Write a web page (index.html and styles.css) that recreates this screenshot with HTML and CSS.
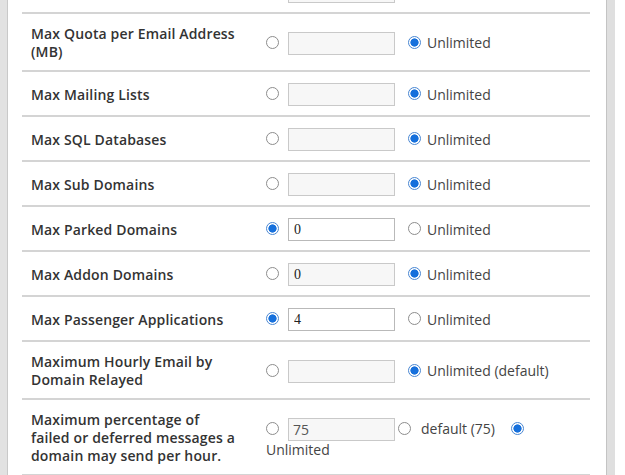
FILE: index.html
```html
<!DOCTYPE html>
<html>
<head>
<meta charset="utf-8">
<link rel="stylesheet" href="styles.css">
</head>
<body>
<div class="frame">
  <div class="left-bar"></div>
  <div class="main">
    <div class="table">
      <div class="row row-cut">
        <div class="label"></div>
        <div class="ctrl"><input type="radio" class="radio"><input type="text" class="field" disabled></div>
      </div>
      <div class="row">
        <div class="label">Max Quota per Email Address (MB)</div>
        <div class="ctrl"><input type="radio" class="radio"><input type="text" class="field" disabled><input type="radio" class="radio gap" checked><span class="opt">Unlimited</span></div>
      </div>
      <div class="row">
        <div class="label">Max Mailing Lists</div>
        <div class="ctrl"><input type="radio" class="radio"><input type="text" class="field" disabled><input type="radio" class="radio gap" checked><span class="opt">Unlimited</span></div>
      </div>
      <div class="row">
        <div class="label">Max SQL Databases</div>
        <div class="ctrl"><input type="radio" class="radio"><input type="text" class="field" disabled><input type="radio" class="radio gap" checked><span class="opt">Unlimited</span></div>
      </div>
      <div class="row">
        <div class="label">Max Sub Domains</div>
        <div class="ctrl"><input type="radio" class="radio"><input type="text" class="field" disabled><input type="radio" class="radio gap" checked><span class="opt">Unlimited</span></div>
      </div>
      <div class="row">
        <div class="label">Max Parked Domains</div>
        <div class="ctrl"><input type="radio" class="radio" checked><input type="text" class="field serif" value="0"><input type="radio" class="radio gap"><span class="opt">Unlimited</span></div>
      </div>
      <div class="row">
        <div class="label">Max Addon Domains</div>
        <div class="ctrl"><input type="radio" class="radio"><input type="text" class="field serif" value="0" disabled><input type="radio" class="radio gap" checked><span class="opt">Unlimited</span></div>
      </div>
      <div class="row">
        <div class="label">Max Passenger Applications</div>
        <div class="ctrl"><input type="radio" class="radio" checked><input type="text" class="field serif" value="4"><input type="radio" class="radio gap"><span class="opt">Unlimited</span></div>
      </div>
      <div class="row">
        <div class="label">Maximum Hourly Email by Domain Relayed</div>
        <div class="ctrl"><input type="radio" class="radio"><input type="text" class="field" disabled><input type="radio" class="radio gap" checked><span class="opt">Unlimited (default)</span></div>
      </div>
      <div class="row">
        <div class="label">Maximum percentage of<br>failed or deferred messages a<br>domain may send per hour.</div>
        <div class="ctrl wrap"><input type="radio" class="radio"><input type="text" class="field sans" value="75" disabled><input type="radio" class="radio tight"><span class="opt2">default (75)</span><input type="radio" class="radio far" checked> Unlimited</div>
      </div>
    </div>
  </div>
  <div class="right-bar"></div>
  <div class="right-edge"></div>
</div>
</body>
</html>
```
FILE: styles.css
```css
html, body {
  margin: 0;
  padding: 0;
  background: #fff;
  height: 475px;
  overflow: hidden;
}

.frame {
  display: flex;
  height: 475px;
  font-family: "Open Sans", "Liberation Sans", sans-serif;
  color: #333;
}

.left-bar {
  width: 7px;
  flex: none;
  background: #e2e2e2;
  border-right: 1px solid #c9c9c9;
}

.main {
  flex: 1;
  min-width: 0;
  overflow: hidden;
}

.right-bar {
  width: 8px;
  flex: none;
  background: #dfdfdf;
  border-left: 1px solid #c4c4c4;
}

.right-edge {
  width: 10px;
  flex: none;
  background: #fff;
}

.table {
  margin: -31px 16px 0 14px;
}

.row {
  display: grid;
  grid-template-columns: 236px 1fr;
  align-items: center;
  border-bottom: 2px solid #d4d4d4;
}

.label {
  padding: 11px 10px 9px 9px;
  font-size: 14px;
  font-weight: 600;
  line-height: 18px;
  letter-spacing: 0.15px;
  color: #333;
}

.ctrl {
  padding: 11px 12px 9px 8px;
  font-size: 14px;
  line-height: 18px;
  color: #444;
  white-space: nowrap;
}

.ctrl.wrap {
  white-space: normal;
}

.radio {
  -webkit-appearance: none;
  appearance: none;
  box-sizing: border-box;
  width: 13px;
  height: 13px;
  margin: 0;
  border: 1px solid #8d8d8d;
  border-radius: 50%;
  background: #fff;
  vertical-align: middle;
  position: relative;
  top: -1px;
}

.radio:checked {
  border-color: #4a87d2;
  background: radial-gradient(circle at center, #1670dc 0, #1670dc 3.8px, #fff 4.4px);
}

.radio.gap {
  margin-left: 13px;
}

.radio.tight {
  margin-left: 3px;
}

.radio.far {
  margin-left: 16px;
}

.field {
  box-sizing: border-box;
  width: 107px;
  height: 23px;
  margin: 0 0 0 9px;
  padding: 0 4px;
  border: 1px solid #b9b9b9;
  background: #fff;
  vertical-align: middle;
  font-family: "Liberation Serif", serif;
  font-size: 14px;
  color: #222;
}

.field:disabled {
  background: #f7f7f7;
  border-color: #c9c9c9;
}

.field.serif {
  font-family: "Liberation Serif", serif;
  padding-left: 5px;
}

.field.sans {
  font-family: "Open Sans", "Liberation Sans", sans-serif;
  color: #555;
  padding-left: 4px;
}

.opt {
  margin-left: 6px;
  vertical-align: middle;
}

.opt2 {
  margin-left: 10px;
  vertical-align: middle;
}
```
